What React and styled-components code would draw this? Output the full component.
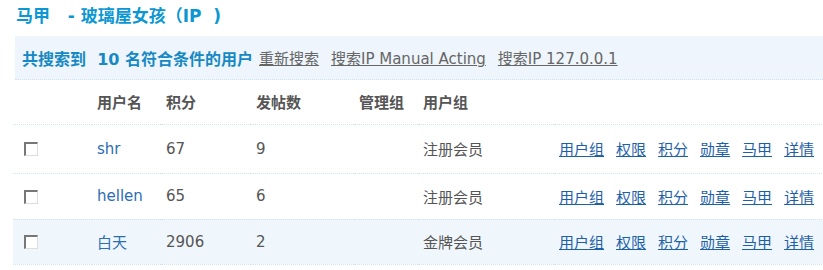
import styled, { createGlobalStyle } from "styled-components"

const Global = createGlobalStyle`
body {
  margin: 0;
  background: #fff;
  overflow: hidden;
  font-family: "DejaVu Sans", "Noto Sans CJK SC", sans-serif;
  font-size: 15px;
  color: #555;
}
`

const Page = styled.div`
width: 840px;
padding-left: 13px;
`
const Title = styled.h3`
margin: 0;
padding: 6px 0 0 3px;
height: 36px;
box-sizing: border-box;
font-size: 17px;
font-weight: bold;
color: #0c97d3;
line-height: 20px;
white-space: pre;
`
const Bar = styled.div`
margin-left: 2px;
height: 43px;
display: flex;
align-items: center;
gap: 12px;
padding-left: 7px;
background: #eef5fc;
border-bottom: 1px dotted #cfe3f2;
`
const Count = styled.strong`
color: #1689c4;
font-size: 16px;
margin-right: -6px;
white-space: pre;
`
const BarLink = styled.a`
color: #666;
text-decoration: underline;
cursor: pointer;
`
const Table = styled.table`
border-collapse: collapse;
table-layout: fixed;
width: 817px;
`
const Th = styled.th`
box-sizing: border-box;
width: ${p => p.w}px;
height: 44px;
padding: 0 0 0 ${p => p.pl ?? 5}px;
text-align: left;
font-weight: bold;
color: #555;
border-bottom: 1px dotted #cfe3f2;
`
const Row = styled.tr`
background: ${p => (p.alt ? "#f0f7fc" : "#fff")};
`
const Td = styled.td`
height: ${p => p.h ?? 45}px;
padding: 0 0 0 ${p => p.pl ?? 5}px;
border-bottom: 1px dotted #cfe3f2;
white-space: nowrap;
`
const Check = styled.span`
display: inline-block;
vertical-align: middle;
width: 11px;
height: 11px;
border-top: 2px solid #777;
border-left: 2px solid #777;
border-right: 1px solid #ddd;
border-bottom: 1px solid #ddd;
background: #fff;
`
const UserLink = styled.a`
color: #2c6db4;
text-decoration: none;
`
const Actions = styled.div`
display: flex;
gap: 12px;
`
const Action = styled.a`
color: #1d60a7;
text-decoration: underline;
cursor: pointer;
`

const users = [
  { name: "shr", credits: 67, posts: 9, group: "注册会员", h: 48 },
  { name: "hellen", credits: 65, posts: 6, group: "注册会员", h: 45 },
  { name: "白天", credits: 2906, posts: 2, group: "金牌会员", alt: true, h: 44 },
]

const actions = ["用户组", "权限", "积分", "勋章", "马甲", "详情"]

const App = () => {
  return (
    <Page>
      <Global />
      <Title>马甲   - 玻璃屋女孩（IP  )</Title>
      <Bar>
        <Count>共搜索到  10 名符合条件的用户</Count>
        <BarLink>重新搜索</BarLink>
        <BarLink>搜索IP Manual Acting</BarLink>
        <BarLink>搜索IP 127.0.0.1</BarLink>
      </Bar>
      <Table>
        <thead>
          <tr>
            <Th w={79} pl={11}></Th>
            <Th w={69}>用户名</Th>
            <Th w={90}>积分</Th>
            <Th w={103}>发帖数</Th>
            <Th w={64}>管理组</Th>
            <Th w={136}>用户组</Th>
            <Th w={276}></Th>
          </tr>
        </thead>
        <tbody>
          {users.map(u => (
            <Row key={u.name} alt={u.alt}>
              <Td pl={11} h={u.h}><Check /></Td>
              <Td h={u.h}><UserLink>{u.name}</UserLink></Td>
              <Td h={u.h}>{u.credits}</Td>
              <Td h={u.h}>{u.posts}</Td>
              <Td h={u.h}></Td>
              <Td h={u.h}>{u.group}</Td>
              <Td h={u.h}>
                <Actions>
                  {actions.map(a => <Action key={a}>{a}</Action>)}
                </Actions>
              </Td>
            </Row>
          ))}
        </tbody>
      </Table>
    </Page>
  )
}

export default App
